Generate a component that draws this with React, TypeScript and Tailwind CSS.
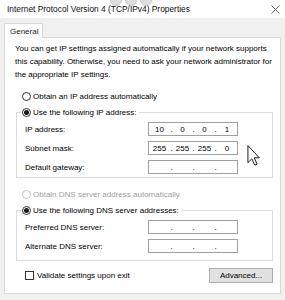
import React from "react";

function Radio({ checked = false, disabled = false }: { checked?: boolean; disabled?: boolean }) {
  return (
    <span
      className={
        "flex items-center justify-center w-[9px] h-[9px] rounded-full border bg-white shrink-0 " +
        (disabled ? "border-[#c4c4c4]" : "border-[#333333]")
      }
    >
      {checked ? <span className="block w-[5px] h-[5px] rounded-full bg-[#1a1a1a]" /> : null}
    </span>
  );
}

function IpField({ parts }: { parts: string[] }) {
  return (
    <div className="flex items-center w-[90px] h-[14px] border border-[#a0a0a0] bg-white">
      <span className="w-[21px] text-center">{parts[0]}</span>
      <span className="w-[3px] text-center">.</span>
      <span className="w-[19px] text-center">{parts[1]}</span>
      <span className="w-[3px] text-center">.</span>
      <span className="w-[19px] text-center">{parts[2]}</span>
      <span className="w-[3px] text-center">.</span>
      <span className="w-[20px] text-center">{parts[3]}</span>
    </div>
  );
}

function Row({ label, parts }: { label: string; parts: string[] }) {
  return (
    <div className="flex items-center h-[14px]">
      <span className="w-[126px] pl-[3px]">{label}</span>
      <IpField parts={parts} />
    </div>
  );
}

export default function App() {
  const empty = ["", "", "", ""];
  return (
    <div className="w-[285px] h-[300px] bg-[#f0f0f0] overflow-hidden relative text-black font-['Liberation_Sans',Arial,sans-serif] text-[8px] leading-[13px]">
      {/* title bar */}
      <div className="h-[18px] bg-white flex items-center justify-between pl-[7px] pr-[5px]">
        <span className="text-[8.4px] text-[#111]">Internet Protocol Version 4 (TCP/IPv4) Properties</span>
        <svg width="9" height="9" viewBox="0 0 9 9">
          <path d="M0.5 0.5 L8.5 8.5 M8.5 0.5 L0.5 8.5" stroke="#555" strokeWidth="0.9" />
        </svg>
      </div>

      {/* faint screen-recorder overlay buttons */}
      <div className="absolute left-[110px] top-[-6px] flex gap-[3px] opacity-60">
        <span className="w-[12px] h-[12px] rounded-full bg-[#c9c9c9] border border-[#a9a9a9]" />
        <span className="w-[12px] h-[12px] rounded-full bg-[#c9c9c9] border border-[#a9a9a9]" />
        <span className="w-[12px] h-[12px] rounded-full bg-[#c9c9c9] border border-[#a9a9a9]" />
      </div>

      {/* tab strip */}
      <div className="h-[19px] flex items-end pl-[4px]">
        <div className="relative z-10 -mb-px w-[39px] h-[15px] bg-white border border-[#d9d9d9] border-b-0 pl-[5px] flex items-center text-[#222]">
          General
        </div>
      </div>

      {/* panel */}
      <div className="ml-[4px] w-[277px] h-[257px] bg-white border border-[#d9d9d9]">
        <p className="ml-[10px] mt-[4px] w-[262px]">
          You can get IP settings assigned automatically if your network supports this capability. Otherwise, you need to ask your network administrator for the appropriate IP settings.
        </p>

        <div className="mt-[9px] ml-[17px] flex items-center gap-[2px] h-[13px]">
          <Radio />
          <span>Obtain an IP address automatically</span>
        </div>

        <fieldset className="mt-[3px] ml-[11px] w-[257px] border border-[#dcdcdc] pl-[5px] pb-[3px]">
          <legend className="pr-[3px]">
            <span className="flex items-center gap-[2px] h-[13px]">
              <Radio checked />
              <span>Use the following IP address:</span>
            </span>
          </legend>
          <div className="mt-[3px] flex flex-col gap-[5px]">
            <Row label="IP address:" parts={["10", "0", "0", "1"]} />
            <Row label="Subnet mask:" parts={["255", "255", "255", "0"]} />
            <Row label="Default gateway:" parts={empty} />
          </div>
        </fieldset>

        <div className="mt-[10px] ml-[17px] flex items-center gap-[2px] h-[13px] text-[#a0a0a0]">
          <Radio disabled />
          <span>Obtain DNS server address automatically</span>
        </div>

        <fieldset className="mt-[3px] ml-[11px] w-[257px] border border-[#dcdcdc] pl-[5px] pb-[7px]">
          <legend className="pr-[3px]">
            <span className="flex items-center gap-[2px] h-[13px]">
              <Radio checked />
              <span>Use the following DNS server addresses:</span>
            </span>
          </legend>
          <div className="mt-[3px] flex flex-col gap-[5px]">
            <Row label="Preferred DNS server:" parts={empty} />
            <Row label="Alternate DNS server:" parts={empty} />
          </div>
        </fieldset>

        <div className="mt-[7px] ml-[20px] w-[248px] flex items-center justify-between">
          <div className="flex items-center gap-[3px]">
            <span className="w-[9px] h-[9px] border border-[#333] bg-white" />
            <span>Validate settings upon exit</span>
          </div>
          <div className="w-[64px] h-[15px] bg-[#e1e1e1] border border-[#adadad] flex items-center justify-center">
            Advanced...
          </div>
        </div>
      </div>

      {/* mouse cursor */}
      <svg className="absolute left-[247px] top-[145px]" width="14" height="21" viewBox="0 0 12 19">
        <path d="M0.5 0.5 L0.5 16 L4 12.5 L6.7 18.2 L8.8 17.3 L6.2 11.6 L10.8 11.6 Z" fill="white" stroke="black" strokeWidth="0.8" strokeLinejoin="round" />
      </svg>
    </div>
  );
}
